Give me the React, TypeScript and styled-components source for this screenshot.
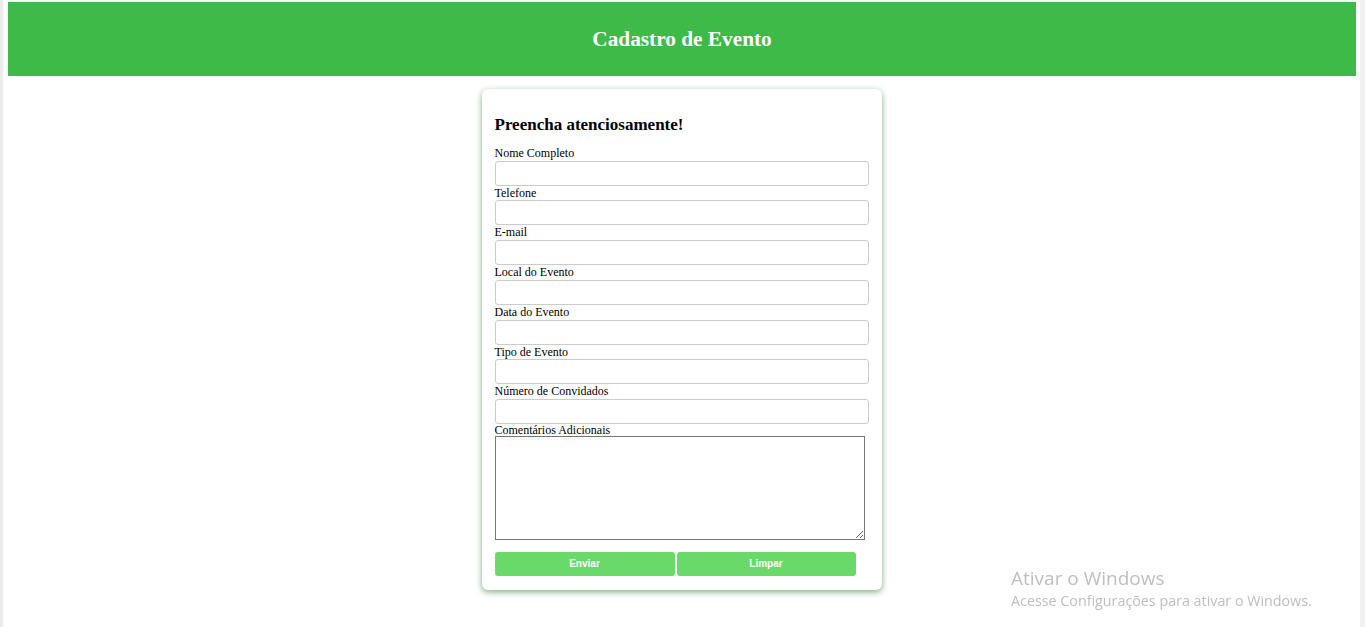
import styled, { createGlobalStyle } from "styled-components";

const GlobalStyle = createGlobalStyle`
  html, body {
    margin: 0;
    padding: 0;
    background: #ffffff;
  }
  body {
    font-family: "Liberation Serif", "Times New Roman", serif;
  }
`;

const Frame = styled.div`
  min-height: 627px;
  box-sizing: border-box;
  border-left: 3px solid #ececec;
  border-right: 5px solid #f1f1f1;
  padding-top: 2px;
`;

const Header = styled.header`
  margin: 0 4px 0 5px;
  height: 74px;
  background: #3dba48;
  display: flex;
  align-items: center;
  justify-content: center;
`;

const Title = styled.h1`
  margin: 0;
  color: #ffffff;
  font-size: 21.3px;
  font-weight: 700;
`;

const Main = styled.main`
  display: flex;
  justify-content: center;
  padding-top: 13px;
`;

const Card = styled.form`
  width: 400px;
  box-sizing: border-box;
  padding: 12px 13px 14px 13px;
  background: #ffffff;
  border-radius: 6px;
  box-shadow: 0 2px 6px rgba(40, 120, 50, 0.6);
`;

const CardTitle = styled.h2`
  margin: 14px 0 11px 0;
  font-size: 17px;
  font-weight: 700;
  color: #000000;
  line-height: 20px;
`;

const Label = styled.label<{ $tight?: boolean }>`
  display: block;
  font-size: 12px;
  line-height: ${(p) => (p.$tight ? "12px" : "14.7px")};
  color: #000000;
`;

const Input = styled.input`
  display: block;
  width: 374px;
  height: 25px;
  box-sizing: border-box;
  margin: 0;
  border: 1px solid #cccccc;
  border-radius: 3px;
  background: #ffffff;
`;

const TextArea = styled.textarea`
  display: block;
  width: 370px;
  height: 104px;
  box-sizing: border-box;
  margin: 0;
  border: 1px solid #767676;
  background: #ffffff;
`;

const Buttons = styled.div`
  display: flex;
  gap: 2px;
  margin-top: 12px;
`;

const Button = styled.button<{ $w: number }>`
  width: ${(p) => p.$w}px;
  height: 24px;
  border: none;
  border-radius: 3px;
  background: #69d96a;
  color: #ffffff;
  font-family: "Liberation Sans", Arial, sans-serif;
  font-size: 10px;
  font-weight: 700;
  cursor: pointer;
`;

const Watermark = styled.div`
  position: fixed;
  left: 1011px;
  top: 566px;
  font-family: "Open Sans", "Noto Sans", sans-serif;
  color: #bfbfbf;
  pointer-events: none;
`;

const WatermarkTitle = styled.div`
  font-size: 19px;
  line-height: 25px;
`;

const WatermarkText = styled.div`
  font-size: 14.3px;
  line-height: 20px;
`;

const fields = [
  "Nome Completo",
  "Telefone",
  "E-mail",
  "Local do Evento",
  "Data do Evento",
  "Tipo de Evento",
  "Número de Convidados",
];

export default function App() {
  return (
    <>
      <GlobalStyle />
      <Frame>
        <Header>
          <Title>Cadastro de Evento</Title>
        </Header>
        <Main>
          <Card onSubmit={(e) => e.preventDefault()}>
            <CardTitle>Preencha atenciosamente!</CardTitle>
            {fields.map((f) => (
              <div key={f}>
                <Label>{f}</Label>
                <Input type="text" />
              </div>
            ))}
            <Label $tight>Comentários Adicionais</Label>
            <TextArea />
            <Buttons>
              <Button type="submit" $w={180}>
                Enviar
              </Button>
              <Button type="reset" $w={179}>
                Limpar
              </Button>
            </Buttons>
          </Card>
        </Main>
      </Frame>
      <Watermark>
        <WatermarkTitle>Ativar o Windows</WatermarkTitle>
        <WatermarkText>Acesse Configurações para ativar o Windows.</WatermarkText>
      </Watermark>
    </>
  );
}
